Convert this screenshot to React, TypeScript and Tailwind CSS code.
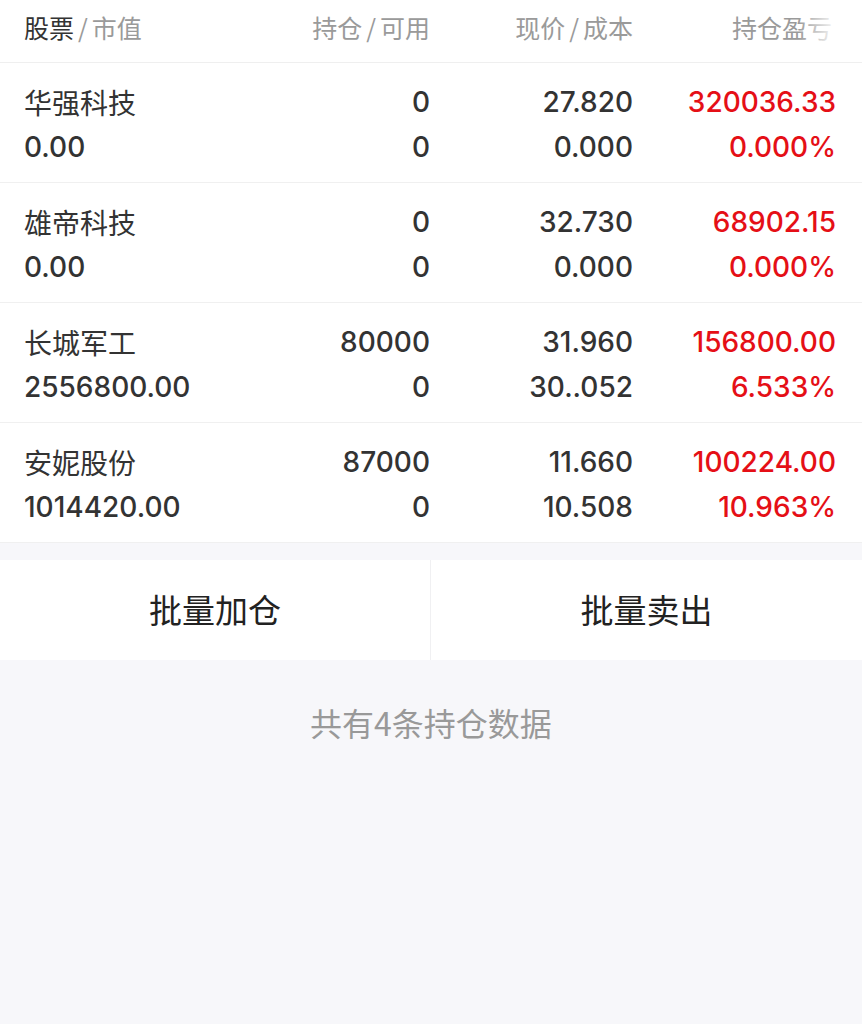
import React from 'react'

type Position = {
  name: string
  marketValue: string
  hold: string
  available: string
  price: string
  cost: string
  profit: string
  profitRate: string
}

const positions: Position[] = [
  { name: '华强科技', marketValue: '0.00', hold: '0', available: '0', price: '27.820', cost: '0.000', profit: '320036.33', profitRate: '0.000%' },
  { name: '雄帝科技', marketValue: '0.00', hold: '0', available: '0', price: '32.730', cost: '0.000', profit: '68902.15', profitRate: '0.000%' },
  { name: '长城军工', marketValue: '2556800.00', hold: '80000', available: '0', price: '31.960', cost: '30..052', profit: '156800.00', profitRate: '6.533%' },
  { name: '安妮股份', marketValue: '1014420.00', hold: '87000', available: '0', price: '11.660', cost: '10.508', profit: '100224.00', profitRate: '10.963%' },
]

const cjk = "font-['Noto_Sans_CJK_SC',sans-serif]"
const num = "font-['Inter','Noto_Sans_CJK_SC',sans-serif] font-medium text-[28px]"

export default function App() {
  return (
    <div className={`min-h-screen w-full bg-[#f7f7fa] ${cjk}`}>
      {/* Header */}
      <div className="relative grid grid-cols-4 h-[63px] items-center pb-[6px] pl-[24px] pr-[26px] bg-white border-b border-[#efefef] text-[25px] text-[#9a9a9a]">
        <div>
          <span className="text-[#333]">股票</span>
          <span className="mx-[4px]">/</span>
          <span>市值</span>
        </div>
        <div className="text-right">持仓<span className="mx-[4px]">/</span>可用</div>
        <div className="text-right">现价<span className="mx-[4px]">/</span>成本</div>
        <div className="text-right pr-[4px]">持仓盈亏</div>
        <div className="absolute right-0 top-0 h-full w-[64px] bg-gradient-to-r from-white/0 via-white/80 to-white" />
      </div>

      {/* Rows */}
      {positions.map((p) => (
        <div
          key={p.name}
          className="grid grid-cols-4 h-[120px] pt-[17px] pl-[24px] pr-[26px] bg-white border-b border-[#f0f0f0] leading-[45px] text-[#333]"
        >
          <div>
            <div className={`${cjk} text-[28px]`}>{p.name}</div>
            <div className={num}>{p.marketValue}</div>
          </div>
          <div className={`text-right ${num}`}>
            <div>{p.hold}</div>
            <div>{p.available}</div>
          </div>
          <div className={`text-right ${num}`}>
            <div>{p.price}</div>
            <div>{p.cost}</div>
          </div>
          <div className={`text-right text-[#e50f16] ${num}`}>
            <div>{p.profit}</div>
            <div>{p.profitRate}</div>
          </div>
        </div>
      ))}

      {/* Batch actions */}
      <div className="mt-[17px] grid grid-cols-2 h-[100px] bg-white text-[33px] text-[#222]">
        <button className="flex items-center justify-center border-r border-[#f0f0f2]">批量加仓</button>
        <button className="flex items-center justify-center">批量卖出</button>
      </div>

      <p className="mt-[42px] text-center text-[32px] leading-[40px] text-[#999]">共有4条持仓数据</p>
    </div>
  )
}
